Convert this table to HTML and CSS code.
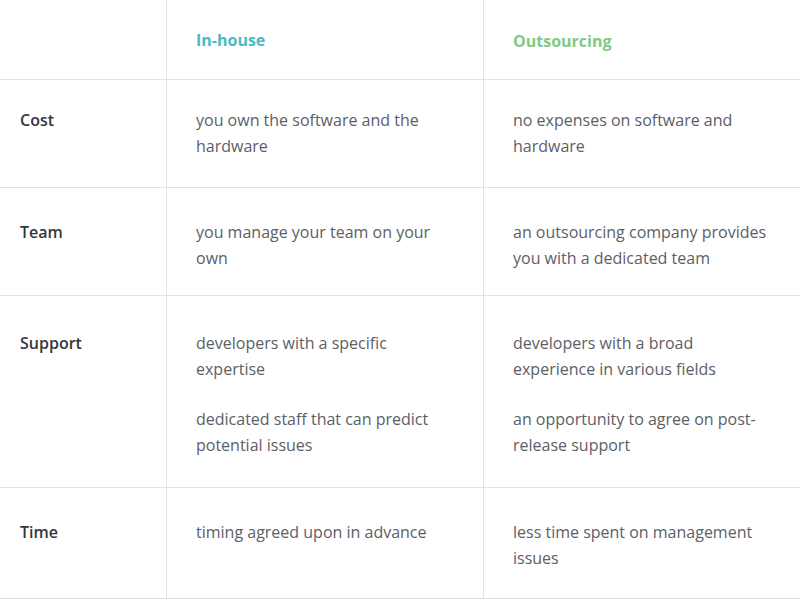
FILE: index.html
```html
<!DOCTYPE html>
<html lang="en">
<head>
<meta charset="utf-8">
<title>In-house vs Outsourcing</title>
<link rel="stylesheet" href="styles.css">
</head>
<body>
<div class="table">
  <div class="row row-head">
    <div class="cell label"></div>
    <div class="cell head head-in">In-house</div>
    <div class="cell head head-out">Outsourcing</div>
  </div>
  <div class="row row-cost">
    <div class="cell label">Cost</div>
    <div class="cell"><p>you own the software and the hardware</p></div>
    <div class="cell"><p>no expenses on software and hardware</p></div>
  </div>
  <div class="row row-team">
    <div class="cell label">Team</div>
    <div class="cell"><p>you manage your team on your own</p></div>
    <div class="cell"><p>an outsourcing company provides you with a dedicated team</p></div>
  </div>
  <div class="row row-support">
    <div class="cell label">Support</div>
    <div class="cell"><p>developers with a specific expertise</p><p>dedicated staff that can predict potential issues</p></div>
    <div class="cell"><p>developers with a broad experience in various fields</p><p>an opportunity to agree on post-release support</p></div>
  </div>
  <div class="row row-time">
    <div class="cell label">Time</div>
    <div class="cell"><p>timing agreed upon in advance</p></div>
    <div class="cell"><p>less time spent on management issues</p></div>
  </div>
</div>
</body>
</html>
```

FILE: styles.css
```css
* { box-sizing: border-box; }
html, body { margin: 0; padding: 0; background: #ffffff; }
body {
  font-family: "Open Sans", "Liberation Sans", sans-serif;
  font-size: 16px;
  line-height: 26px;
  color: #5c6066;
}
.table { width: 800px; }
.row {
  display: grid;
  grid-template-columns: 166px 317px 317px;
  border-bottom: 1px solid #e2e2e2;
}
.cell { padding: 0 30px 0 29px; }
.cell + .cell { border-left: 1px solid #e2e2e2; }
.cell p { margin: 0; }
.cell p + p { margin-top: 24px; }
.label {
  padding-left: 20px;
  padding-right: 10px;
  font-weight: 600;
  color: #33373c;
}
.row-head { height: 80px; }
.row-head .cell { display: flex; align-items: center; padding-top: 2px; }
.head { font-weight: 700; }
.head-in { color: #4cb9c4; padding-bottom: 2px; }
.head-out { color: #82c983; }
.row-cost .cell { padding-top: 27px; padding-bottom: 28px; }
.row-team .cell { padding-top: 31px; padding-bottom: 24px; }
.row-support .cell { padding-top: 34px; padding-bottom: 29px; }
.row-time .cell { padding-top: 31px; padding-bottom: 27px; }
```
